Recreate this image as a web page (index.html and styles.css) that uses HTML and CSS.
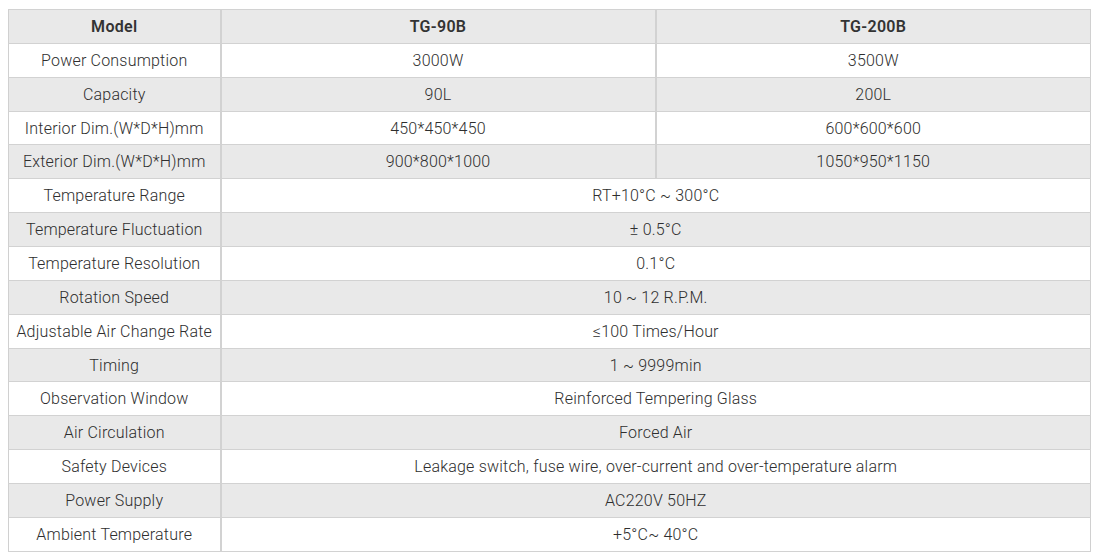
FILE: index.html
```html
<!DOCTYPE html>
<html lang="en">
<head>
<meta charset="utf-8">
<title>Specifications</title>
<link rel="stylesheet" href="styles.css">
</head>
<body>
<table class="spec">
  <colgroup>
    <col class="c-label">
    <col class="c-val">
    <col class="c-val">
  </colgroup>
  <thead>
    <tr class="head"><th>Model</th><th>TG-90B</th><th>TG-200B</th></tr>
  </thead>
  <tbody>
    <tr><td>Power Consumption</td><td>3000W</td><td>3500W</td></tr>
    <tr><td>Capacity</td><td>90L</td><td>200L</td></tr>
    <tr><td>Interior Dim.(W*D*H)mm</td><td>450*450*450</td><td>600*600*600</td></tr>
    <tr><td>Exterior Dim.(W*D*H)mm</td><td>900*800*1000</td><td>1050*950*1150</td></tr>
    <tr><td>Temperature Range</td><td colspan="2">RT+10°C ~ 300°C</td></tr>
    <tr><td>Temperature Fluctuation</td><td colspan="2">± 0.5°C</td></tr>
    <tr><td>Temperature Resolution</td><td colspan="2">0.1°C</td></tr>
    <tr><td>Rotation Speed</td><td colspan="2">10 ~ 12 R.P.M.</td></tr>
    <tr><td>Adjustable Air Change Rate</td><td colspan="2">≤100 Times/Hour</td></tr>
    <tr><td>Timing</td><td colspan="2">1 ~ 9999min</td></tr>
    <tr><td>Observation Window</td><td colspan="2">Reinforced Tempering Glass</td></tr>
    <tr><td>Air Circulation</td><td colspan="2">Forced Air</td></tr>
    <tr><td>Safety Devices</td><td colspan="2">Leakage switch, fuse wire, over-current and over-temperature alarm</td></tr>
    <tr><td>Power Supply</td><td colspan="2">AC220V 50HZ</td></tr>
    <tr><td>Ambient Temperature</td><td colspan="2">+5°C~ 40°C</td></tr>
  </tbody>
</table>
</body>
</html>
```

FILE: styles.css
```css
html, body {
  margin: 0;
  padding: 0;
  background: #ffffff;
}

body {
  padding: 9px 11px 0 8px;
  font-family: Roboto, "Liberation Sans", Arial, sans-serif;
  font-size: 16px;
  color: #333333;
}

.spec {
  width: 1082px;
  border-collapse: collapse;
  table-layout: fixed;
  border: 1px solid #d0d0d0;
}

.c-label { width: 212px; }
.c-val { width: 435px; }

.spec th,
.spec td {
  height: 31.87px;
  padding: 1px 2px 0;
  text-align: center;
  vertical-align: middle;
  border-top: 1px solid #d2d2d2;
  border-bottom: 1px solid #d2d2d2;
  border-left: 2px solid #d2d2d2;
  border-right: 2px solid #d2d2d2;
  line-height: 18px;
  font-weight: 300;
  letter-spacing: 0.2px;
  color: #2e2e2e;
}

.spec th {
  font-weight: 600;
  letter-spacing: 0.3px;
  color: #333333;
}

.spec tr > :first-child { border-left: 1px solid #d0d0d0; }
.spec tr > :last-child { border-right: 1px solid #d0d0d0; }

.spec tbody tr:nth-child(odd) { background: #ffffff; }
.spec tbody tr:nth-child(even) { background: #e9e9e9; }
.spec .head { background: #e9e9e9; }
```
